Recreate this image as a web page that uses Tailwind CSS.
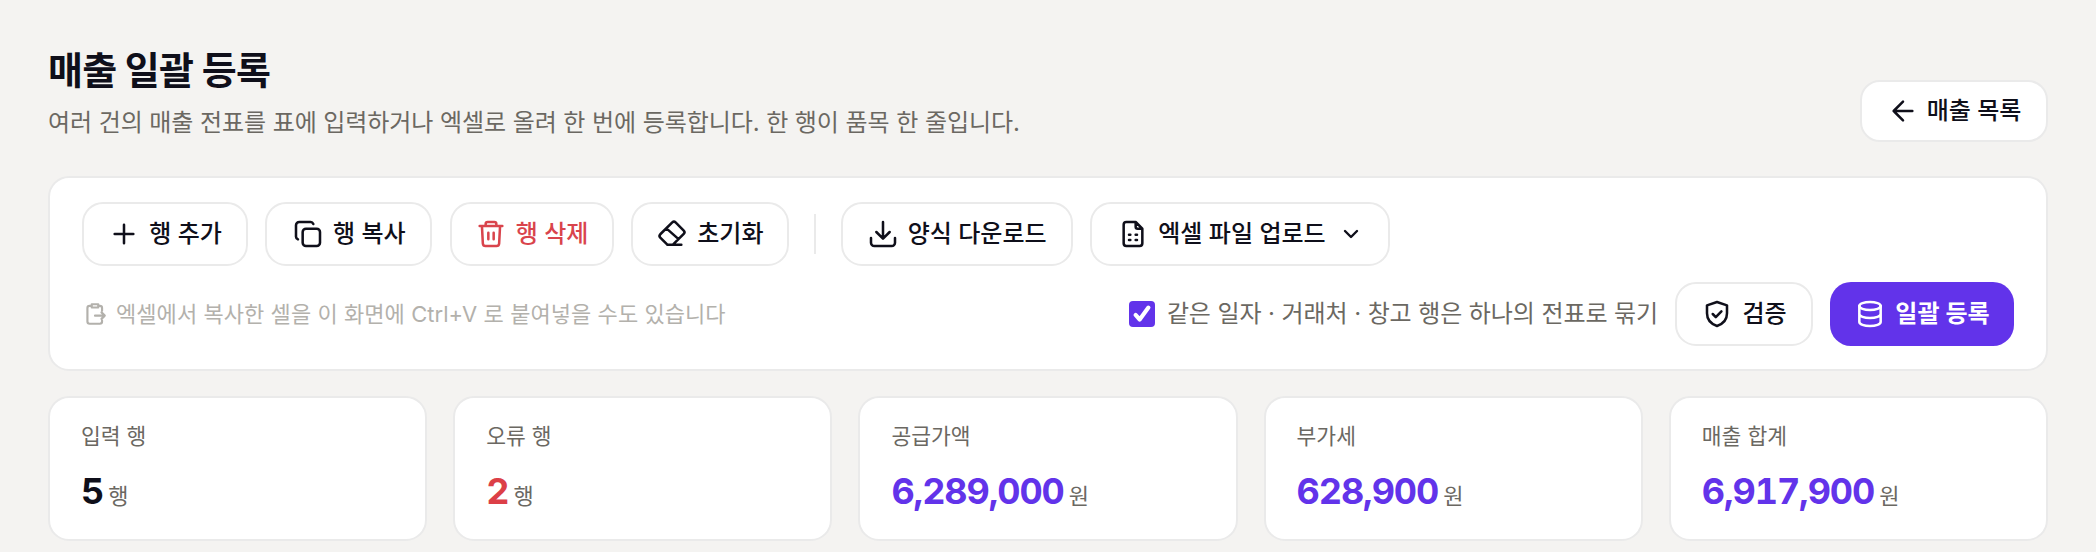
<!DOCTYPE html>
<html lang="ko">
<head>
<meta charset="UTF-8" />
<script src="https://cdn.jsdelivr.net/npm/@tailwindcss/browser@4"></script>
</head>
<body class="bg-[#f4f3f1] font-['Inter','Noto_Sans_CJK_KR',sans-serif] text-[#0f0f1a] overflow-hidden">
<main class="h-[552px] overflow-hidden px-12 pt-[40px]">
    <!-- page header -->
    <header class="flex items-end justify-between h-[102px]">
        <div class="pb-[1px]">
            <h1 class="text-[38px] leading-[48px] font-bold tracking-[-0.7px]">매출 일괄 등록</h1>
            <p class="mt-[11px] text-[24px] leading-[36px] text-[#6b6862] tracking-[-0.08px]">여러 건의 매출 전표를 표에 입력하거나 엑셀로 올려 한 번에 등록합니다. 한 행이 품목 한 줄입니다.</p>
        </div>
        <a class="flex items-center gap-[8px] w-[188px] h-[62px] justify-center bg-white border-2 border-[#eaeaea] rounded-[20px] text-[24px] font-medium">
            <svg class="w-[32px] h-[32px]" viewBox="0 0 24 24" fill="none" stroke="currentColor" stroke-width="1.900" stroke-linecap="round" stroke-linejoin="round"><path d="M19 12H5M12 5l-7 7 7 7"/></svg>
            매출 목록
        </a>
    </header>

    <!-- toolbar card -->
    <section class="mt-[34px] h-[195px] bg-white border-2 border-[#eaeaea] rounded-[21px] px-[32px] pt-[24px]">
        <div class="flex items-center gap-[17.3px] h-[64px]">
            <button class="flex items-center justify-center gap-[9px] w-[166px] h-[64px] border-2 border-[#eaeaea] rounded-[21px] text-[24px] font-medium">
                <svg class="w-[32px] h-[32px]" viewBox="0 0 24 24" fill="none" stroke="currentColor" stroke-width="1.900" stroke-linecap="round"><path d="M12 5v14M5 12h14"/></svg>
                행 추가
            </button>
            <button class="flex items-center justify-center gap-[9px] w-[167px] h-[64px] border-2 border-[#eaeaea] rounded-[21px] text-[24px] font-medium">
                <svg class="w-[32px] h-[32px]" viewBox="0 0 24 24" fill="none" stroke="currentColor" stroke-width="1.900" stroke-linecap="round" stroke-linejoin="round"><rect x="8" y="8" width="13" height="13" rx="2.5"/><path d="M4.500 16C3.600 15.600 3 14.800 3 14V5.500C3 4.100 4.100 3 5.500 3H14c.9 0 1.600.6 2 1.500"/></svg>
                행 복사
            </button>
            <button class="flex items-center justify-center gap-[9px] w-[164px] h-[64px] border-2 border-[#eaeaea] rounded-[21px] text-[24px] font-medium text-[#d9444c]">
                <svg class="w-[32px] h-[32px]" viewBox="0 0 24 24" fill="none" stroke="currentColor" stroke-width="1.900" stroke-linecap="round" stroke-linejoin="round"><path d="M3.500 6h17M18.800 6l-.7 13.200A2 2 0 0 1 16.100 21H7.900a2 2 0 0 1-2-1.800L5.200 6M8 6V4.500A1.500 1.500 0 0 1 9.500 3h5A1.500 1.500 0 0 1 16 4.500V6M10 11v5M14 11v5"/></svg>
                행 삭제
            </button>
            <button class="flex items-center justify-center gap-[9px] w-[158px] h-[64px] border-2 border-[#eaeaea] rounded-[21px] text-[24px] font-medium">
                <svg class="w-[32px] h-[32px]" viewBox="0 0 24 24" fill="none" stroke="currentColor" stroke-width="1.900" stroke-linecap="round" stroke-linejoin="round"><path d="M8.500 20 3.200 14.700a1.800 1.800 0 0 1 0-2.500L12.200 3.300a1.800 1.800 0 0 1 2.500 0l6.100 6.100a1.800 1.800 0 0 1 0 2.500L12.700 20zM8 8l8.500 7.500M8.500 20H19"/></svg>
                초기화
            </button>
            <span class="w-[2px] h-[40px] mx-[7.6px] bg-[#eaeaea]"></span>
            <button class="flex items-center justify-center gap-[9px] w-[232px] h-[64px] border-2 border-[#eaeaea] rounded-[21px] text-[24px] font-medium">
                <svg class="w-[32px] h-[32px]" viewBox="0 0 24 24" fill="none" stroke="currentColor" stroke-width="1.900" stroke-linecap="round" stroke-linejoin="round"><path d="M3 15v3.500A2.500 2.500 0 0 0 5.500 21h13a2.500 2.500 0 0 0 2.500-2.500V15M12 3v12M7 10.500l5 5 5-5"/></svg>
                양식 다운로드
            </button>
            <button class="flex items-center justify-center gap-[9px] w-[300px] h-[64px] border-2 border-[#eaeaea] rounded-[21px] text-[24px] font-medium">
                <svg class="w-[32px] h-[32px]" viewBox="0 0 24 24" fill="none" stroke="currentColor" stroke-width="1.900" stroke-linecap="round" stroke-linejoin="round"><path d="M14 3H7a2 2 0 0 0-2 2v14a2 2 0 0 0 2 2h10a2 2 0 0 0 2-2V8zM14 3v3.500A1.500 1.500 0 0 0 15.500 8H19M9 12.500h1M14 12.500h1M9 16.500h1M14 16.500h1"/></svg>
                엑셀 파일 업로드
                <svg class="w-[24px] h-[24px] ml-[4px]" viewBox="0 0 24 24" fill="none" stroke="currentColor" stroke-width="2.400" stroke-linecap="round" stroke-linejoin="round"><path d="m6 9 6 6 6-6"/></svg>
            </button>
        </div>
        <div class="flex items-center justify-between mt-[16px] h-[64px]">
            <p class="flex items-center gap-[8px] text-[22px] text-[#b3b1ac] tracking-[0.06px]">
                <svg class="w-[26px] h-[26px]" viewBox="0 0 24 24" fill="none" stroke="currentColor" stroke-width="2" stroke-linecap="round" stroke-linejoin="round"><path d="M9 3h6v3H9zM15 4.500h1.500A2 2 0 0 1 18.500 6.500V9M9 4.500H7a2 2 0 0 0-2 2V19a2 2 0 0 0 2 2h9.500a2 2 0 0 0 2-2v-1M12 13.500h9M18 10.500l3 3-3 3"/></svg>
                엑셀에서 복사한 셀을 이 화면에 Ctrl+V 로 붙여넣을 수도 있습니다
            </p>
            <div class="flex items-center">
                <label class="flex items-center gap-[12px] text-[24px] text-[#6b6862] tracking-[-0.1px]">
                    <span class="flex items-center justify-center w-[26px] h-[26px] rounded-[4px] bg-[#6233ea]">
                        <svg class="w-[22px] h-[22px]" viewBox="0 0 24 24" fill="none" stroke="#fff" stroke-width="4.500" stroke-linecap="round" stroke-linejoin="round"><path d="m5 13 4.500 5L19 5"/></svg>
                    </span>
                    같은 일자 · 거래처 · 창고 행은 하나의 전표로 묶기
                </label>
                <button class="flex items-center justify-center gap-[9px] ml-[17px] w-[138px] h-[64px] border-2 border-[#eaeaea] rounded-[21px] text-[24px] font-medium">
                    <svg class="w-[32px] h-[32px]" viewBox="0 0 24 24" fill="none" stroke="currentColor" stroke-width="1.900" stroke-linecap="round" stroke-linejoin="round"><path d="M12 3 19.500 5.500V11.500C19.500 16 16.500 19.500 12 21 7.500 19.500 4.500 16 4.500 11.500V5.500zM8.800 12l2.300 2.300 4.200-4.300"/></svg>
                    검증
                </button>
                <button class="flex items-center justify-center gap-[9px] ml-[17px] w-[184px] h-[64px] rounded-[21px] bg-[#6233ea] text-white text-[24px] font-semibold">
                    <svg class="w-[32px] h-[32px]" viewBox="0 0 24 24" fill="none" stroke="currentColor" stroke-width="1.900" stroke-linecap="round" stroke-linejoin="round"><ellipse cx="12" cy="6" rx="8" ry="3"/><path d="M4 6v12c0 1.700 3.600 3 8 3s8-1.300 8-3V6M4 12c0 1.700 3.600 3 8 3s8-1.300 8-3"/></svg>
                    일괄 등록
                </button>
            </div>
        </div>
    </section>

    <!-- summary cards -->
    <section class="grid grid-cols-5 gap-[26px] mt-[25px]">
        <div class="h-[145px] bg-white border-2 border-[#eaeaea] rounded-[21px] px-[31px] pt-[22px]">
            <p class="text-[21.5px] leading-[32px] text-[#6b6862]">입력 행</p>
            <p class="mt-[17px] flex items-baseline gap-[5px] text-[22px] text-[#6b6862]"><span class="text-[36px] leading-[44px] font-bold tabular-nums tracking-[-1.1px] text-[#0f0f1a]">5</span>행</p>
        </div>
        <div class="h-[145px] bg-white border-2 border-[#eaeaea] rounded-[21px] px-[31px] pt-[22px]">
            <p class="text-[21.5px] leading-[32px] text-[#6b6862]">오류 행</p>
            <p class="mt-[17px] flex items-baseline gap-[5px] text-[22px] text-[#6b6862]"><span class="text-[36px] leading-[44px] font-bold tabular-nums tracking-[-1.1px] text-[#dc3f47]">2</span>행</p>
        </div>
        <div class="h-[145px] bg-white border-2 border-[#eaeaea] rounded-[21px] px-[31px] pt-[22px]">
            <p class="text-[21.5px] leading-[32px] text-[#6b6862]">공급가액</p>
            <p class="mt-[17px] flex items-baseline gap-[5px] text-[22px] text-[#6b6862]"><span class="text-[36px] leading-[44px] font-bold tabular-nums tracking-[-1.1px] text-[#6233ea]">6,289,000</span>원</p>
        </div>
        <div class="h-[145px] bg-white border-2 border-[#eaeaea] rounded-[21px] px-[31px] pt-[22px]">
            <p class="text-[21.5px] leading-[32px] text-[#6b6862]">부가세</p>
            <p class="mt-[17px] flex items-baseline gap-[5px] text-[22px] text-[#6b6862]"><span class="text-[36px] leading-[44px] font-bold tabular-nums tracking-[-1.1px] text-[#6233ea]">628,900</span>원</p>
        </div>
        <div class="h-[145px] bg-white border-2 border-[#eaeaea] rounded-[21px] px-[31px] pt-[22px]">
            <p class="text-[21.5px] leading-[32px] text-[#6b6862]">매출 합계</p>
            <p class="mt-[17px] flex items-baseline gap-[5px] text-[22px] text-[#6b6862]"><span class="text-[36px] leading-[44px] font-bold tabular-nums tracking-[-1.1px] text-[#6233ea]">6,917,900</span>원</p>
        </div>
    </section>
</main>
</body>
</html>
